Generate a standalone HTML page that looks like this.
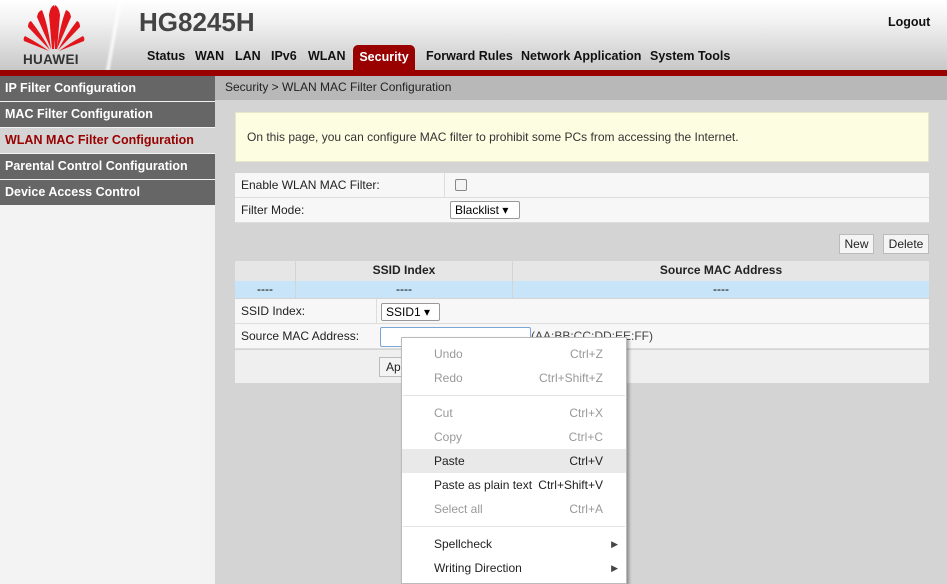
<!DOCTYPE html>
<html><head><meta charset="utf-8"><style>
*{margin:0;padding:0;box-sizing:border-box}
body{width:947px;height:584px;overflow:hidden;font-family:"Liberation Sans",Arial,sans-serif;font-size:12px;color:#000;background:#d4d4d4;position:relative}
.abs{position:absolute}
#hdr{left:0;top:0;width:947px;height:70px;background:linear-gradient(#fff 0%,#f2f2f2 30%,#c8c8c8 100%)}
#red{left:0;top:70px;width:947px;height:6px;background:#990000}
.nav{top:49px;font-weight:bold;font-size:12.5px;color:#111}
#sec{left:353px;top:45px;width:62px;height:26px;background:#990000;border-radius:5px 5px 0 0;color:#fff;font-weight:bold;font-size:12.5px;text-align:center;line-height:24px}
#side{left:0;top:76px;width:215px;height:508px;background:#f3f3f3}
.si{position:absolute;left:0;width:215px;height:25px;background:#666;color:#fff;font-weight:bold;font-size:12.5px;line-height:24px;padding-left:5px}
#bc{left:215px;top:76px;width:732px;height:24px;background:#b8b8b8;line-height:23px;padding-left:10px;color:#222}
.row{position:absolute;left:235px;width:694px;background:#f7f7f7;border-bottom:1px solid #ddd}
.lab{position:absolute;left:6px;top:0;color:#222}
.sel{position:absolute;background:#fff;border:1px solid #999;border-radius:2px;height:18px;line-height:16px;padding-left:4px}
.btn{position:absolute;height:20px;border:1px solid #bbb;background:#f4f4f4;line-height:18px;text-align:center;color:#222}
#menu{left:401px;top:337px;width:226px;height:247px;background:#fff;border:1px solid #bbb;box-shadow:2px 2px 3px rgba(0,0,0,.35)}
.mi{position:absolute;left:0;width:224px;height:24px;line-height:24px;padding-left:32px;font-size:12px;color:#222}
.mi.d{color:#999}
.mi span{position:absolute;right:23px}
.sep{position:absolute;left:1px;width:222px;height:1px;background:#e3e3e3}
</style></head><body>
<div id="hdr" class="abs"></div>
<svg class="abs" style="left:22px;top:5px" width="64" height="46" viewBox="0 0 64 46">
<g fill="#e2141c">
<path d="M30 44 L27 10 Q28 2 32 0 Q34 6 32 44Z"/>
<path d="M34 44 L37 10 Q36 2 32 0 Q30 6 32 44Z" transform="translate(1,0)"/>
<path d="M29 44 L15 12 Q16 6 20 5 Q26 20 29 44Z"/>
<path d="M35 44 L49 12 Q48 6 44 5 Q38 20 35 44Z"/>
<path d="M28 45 L6 22 Q6 17 9 16 Q20 30 28 45Z"/>
<path d="M36 45 L58 22 Q58 17 55 16 Q44 30 36 45Z"/>
<path d="M27 46 L2 36 Q1 33 3 31 Q16 38 27 46Z"/>
<path d="M37 46 L62 36 Q63 33 61 31 Q48 38 37 46Z"/>
</g></svg>
<div class="abs" style="left:23px;top:52px;font-weight:bold;font-size:13.5px;color:#333;letter-spacing:0.3px">HUAWEI</div>
<div class="abs" style="left:103px;top:0;width:22px;height:70px;background:linear-gradient(100deg,transparent 40%,rgba(255,255,255,.8) 50%,transparent 60%)"></div>
<div class="abs" style="left:139px;top:7px;font-weight:bold;font-size:26px;color:#444">HG8245H</div>
<div class="abs" style="left:888px;top:15px;font-weight:bold;font-size:12.5px;color:#111">Logout</div>
<div class="abs nav" style="left:147px">Status</div>
<div class="abs nav" style="left:195px">WAN</div>
<div class="abs nav" style="left:235px">LAN</div>
<div class="abs nav" style="left:271px">IPv6</div>
<div class="abs nav" style="left:308px">WLAN</div>
<div id="sec" class="abs">Security</div>
<div class="abs nav" style="left:426px">Forward Rules</div>
<div class="abs nav" style="left:521px">Network Application</div>
<div class="abs nav" style="left:650px">System Tools</div>
<div id="red" class="abs"></div>
<div id="side" class="abs">
<div class="si" style="top:0">IP Filter Configuration</div>
<div class="si" style="top:26px">MAC Filter Configuration</div>
<div class="si" style="top:52px;background:#d4d4d4;color:#990000">WLAN MAC Filter Configuration</div>
<div class="si" style="top:78px">Parental Control Configuration</div>
<div class="si" style="top:104px">Device Access Control</div>
</div>
<div id="bc" class="abs">Security &gt; WLAN MAC Filter Configuration</div>
<div class="abs" style="left:235px;top:112px;width:694px;height:50px;background:#fdfde2;border:1px solid #e8e8c8;line-height:48px;padding-left:11px;color:#333">On this page, you can configure MAC filter to prohibit some PCs from accessing the Internet.</div>
<div class="row" style="top:173px;height:25px"><div class="lab" style="line-height:25px">Enable WLAN MAC Filter:</div><div class="abs" style="left:209px;top:0;width:1px;height:50px;background:#ddd"></div>
<div class="abs" style="left:220px;top:6px;width:12px;height:12px;border:1px solid #888;border-radius:2px;background:#f4f4f4"></div></div>
<div class="row" style="top:198px;height:25px"><div class="lab" style="line-height:25px">Filter Mode:</div><div class="sel" style="left:215px;top:3px;width:70px">Blacklist ▾</div></div>
<div class="btn" style="left:839px;top:234px;width:35px">New</div>
<div class="btn" style="left:883px;top:234px;width:46px">Delete</div>
<div class="abs" style="left:235px;top:261px;width:694px;height:20px;background:#e6e6e6;font-weight:bold;line-height:19px;color:#222">
<div class="abs" style="left:60px;top:0;width:1px;height:37px;background:#d4d4d4"></div>
<div class="abs" style="left:277px;top:0;width:1px;height:37px;background:#d4d4d4"></div>
<div class="abs" style="left:61px;width:216px;text-align:center">SSID Index</div>
<div class="abs" style="left:278px;width:416px;text-align:center">Source MAC Address</div></div>
<div class="abs" style="left:235px;top:281px;width:694px;height:17px;background:#c7e4f8;line-height:17px">
<div class="abs" style="left:0;width:60px;text-align:center">----</div>
<div class="abs" style="left:61px;width:216px;text-align:center">----</div>
<div class="abs" style="left:278px;width:416px;text-align:center">----</div>
<div class="abs" style="left:60px;top:0;width:1px;height:17px;background:#d4d4d4"></div>
<div class="abs" style="left:277px;top:0;width:1px;height:17px;background:#d4d4d4"></div></div>
<div class="row" style="top:299px;height:25px"><div class="lab" style="line-height:25px">SSID Index:</div><div class="abs" style="left:141px;top:0;width:1px;height:50px;background:#ddd"></div>
<div class="sel" style="left:146px;top:4px;width:59px">SSID1 ▾</div></div>
<div class="row" style="top:324px;height:25px"><div class="lab" style="line-height:25px">Source MAC Address:</div>
<div class="abs" style="left:145px;top:3px;width:151px;height:20px;background:#fff;border:1px solid #7aa5d6;border-radius:2px"></div>
<div class="abs" style="left:296px;top:0;line-height:25px;color:#444">(AA:BB:CC:DD:EE:FF)</div></div>
<div class="abs" style="left:235px;top:350px;width:694px;height:33px;background:#efefef"></div>
<div class="btn" style="left:379px;top:357px;width:40px;text-align:left;padding-left:6px">Apply</div>
<div id="menu" class="abs">
<div class="mi d" style="top:4px">Undo<span>Ctrl+Z</span></div>
<div class="mi d" style="top:28px">Redo<span>Ctrl+Shift+Z</span></div>
<div class="sep" style="top:57px"></div>
<div class="mi d" style="top:63px">Cut<span>Ctrl+X</span></div>
<div class="mi d" style="top:87px">Copy<span>Ctrl+C</span></div>
<div class="mi" style="top:111px;background:#e9e9e9">Paste<span>Ctrl+V</span></div>
<div class="mi" style="top:135px">Paste as plain text<span>Ctrl+Shift+V</span></div>
<div class="mi d" style="top:159px">Select all<span>Ctrl+A</span></div>
<div class="sep" style="top:188px"></div>
<div class="mi" style="top:194px">Spellcheck<span style="right:8px;font-size:9px;color:#444">▶</span></div>
<div class="mi" style="top:218px">Writing Direction<span style="right:8px;font-size:9px;color:#444">▶</span></div>
</div>
</body></html>
